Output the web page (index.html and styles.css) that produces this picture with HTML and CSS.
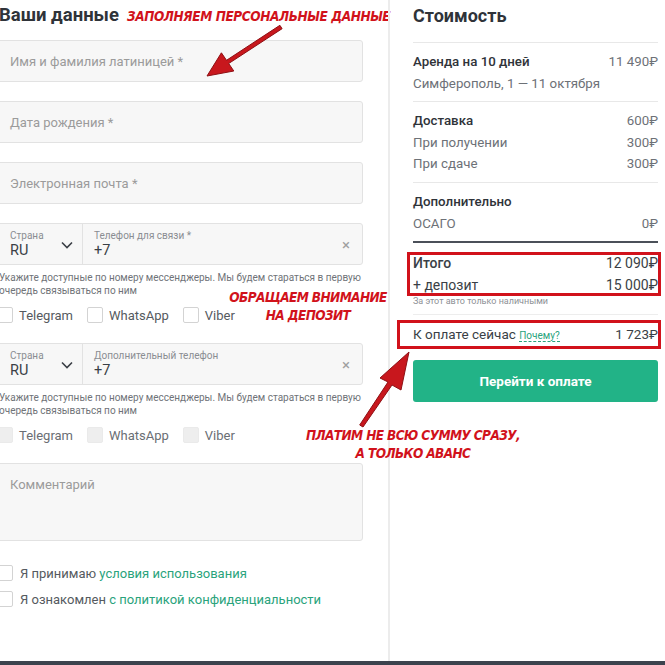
FILE: index.html
```html
<!DOCTYPE html>
<html lang="ru">
<head>
    <meta charset="UTF-8">
    <meta name="viewport" content="width=device-width, initial-scale=1.0">
    <title>Оформление аренды</title>
    <link rel="stylesheet" href="styles.css">
</head>
<body>
    <div class="page">
        <main class="layout">
            <section class="form">
                <div class="form-head">
                    <h1>Ваши данные</h1>
                    <span class="note note-top">ЗАПОЛНЯЕМ ПЕРСОНАЛЬНЫЕ ДАННЫЕ</span>
                </div>

                <div class="field">Имя и фамилия латиницей *</div>
                <div class="field">Дата рождения *</div>
                <div class="field">Электронная почта *</div>

                <div class="phone">
                    <div class="phone-country">
                        <div class="phone-text">
                            <span class="phone-label">Страна</span>
                            <span class="phone-value">RU</span>
                        </div>
                        <svg class="chevron" width="12" height="8" viewBox="0 0 12 8"><path d="M1 1.5l5 5 5-5" fill="none" stroke="#3a3f46" stroke-width="1.6"/></svg>
                    </div>
                    <div class="phone-number">
                        <div class="phone-text">
                            <span class="phone-label">Телефон для связи *</span>
                            <span class="phone-value">+7</span>
                        </div>
                        <span class="phone-clear">×</span>
                    </div>
                </div>
                <p class="hint">Укажите доступные по номеру мессенджеры. Мы будем стараться в первую<br>очередь связываться по ним</p>
                <div class="messengers">
                    <label class="check"><span class="box"></span>Telegram</label>
                    <label class="check"><span class="box"></span>WhatsApp</label>
                    <label class="check"><span class="box"></span>Viber</label>
                </div>

                <div class="phone">
                    <div class="phone-country">
                        <div class="phone-text">
                            <span class="phone-label">Страна</span>
                            <span class="phone-value">RU</span>
                        </div>
                        <svg class="chevron" width="12" height="8" viewBox="0 0 12 8"><path d="M1 1.5l5 5 5-5" fill="none" stroke="#3a3f46" stroke-width="1.6"/></svg>
                    </div>
                    <div class="phone-number">
                        <div class="phone-text">
                            <span class="phone-label">Дополнительный телефон</span>
                            <span class="phone-value">+7</span>
                        </div>
                        <span class="phone-clear">×</span>
                    </div>
                </div>
                <p class="hint">Укажите доступные по номеру мессенджеры. Мы будем стараться в первую<br>очередь связываться по ним</p>
                <div class="messengers disabled">
                    <label class="check"><span class="box"></span>Telegram</label>
                    <label class="check"><span class="box"></span>WhatsApp</label>
                    <label class="check"><span class="box"></span>Viber</label>
                </div>

                <div class="field comment">Комментарий</div>

                <div class="agree">
                    <label class="check"><span class="box"></span>Я принимаю&nbsp;<a>условия использования</a></label>
                    <label class="check"><span class="box"></span>Я ознакомлен&nbsp;<a>с политикой конфиденциальности</a></label>
                </div>
            </section>

            <aside class="summary">
                <h2>Стоимость</h2>
                <div class="group">
                    <div class="row strong"><span>Аренда на 10 дней</span><span class="price">11 490₽</span></div>
                    <div class="row"><span>Симферополь, 1 — 11 октября</span></div>
                </div>
                <div class="group">
                    <div class="row strong"><span>Доставка</span><span class="price">600₽</span></div>
                    <div class="row"><span>При получении</span><span class="price">300₽</span></div>
                    <div class="row"><span>При сдаче</span><span class="price">300₽</span></div>
                </div>
                <div class="group group-last">
                    <div class="row strong"><span>Дополнительно</span></div>
                    <div class="row"><span>ОСАГО</span><span class="price">0₽</span></div>
                </div>
                <div class="totals">
                    <div class="row strong dark"><span>Итого</span><span class="price">12 090₽</span></div>
                    <div class="row dark"><span>+ депозит</span><span class="price">15 000₽</span></div>
                    <span class="mark mark-totals"></span>
                </div>
                <p class="cash">За этот авто только наличными</p>
                <div class="pay-now">
                    <span class="pay-label">К оплате сейчас <a class="why">Почему?</a></span>
                    <span class="price">1 723₽</span>
                    <span class="mark mark-pay"></span>
                </div>
                <button class="pay-btn">Перейти к оплате</button>
            </aside>
        </main>
        <div class="bottom-bar"></div>

        <div class="note note-deposit">ОБРАЩАЕМ ВНИМАНИЕ<br>НА ДЕПОЗИТ</div>
        <div class="note note-advance">ПЛАТИМ НЕ ВСЮ СУММУ СРАЗУ,<br>А ТОЛЬКО АВАНС</div>

        <svg class="arrow arrow-top" width="90" height="62" viewBox="0 0 90 62">
            <polygon points="79.9,5.3 82.1,8.7 28.7,43.5 33.8,51 7,56 21.4,32.8 26.5,40.3" fill="#c8171d" stroke="#8e1014" stroke-width="1"/>
        </svg>
        <svg class="arrow arrow-pay" width="70" height="80" viewBox="0 0 70 80">
            <polygon points="9.7,75 13,77 42,35 51,40 59,2 30,28 38,32" fill="#c8171d" stroke="#8e1014" stroke-width="1"/>
        </svg>
    </div>
</body>
</html>
```

FILE: styles.css
```css
:root {
    --text: #2f3339;
    --muted: #6d7177;
    --placeholder: #9b9b9b;
    --field-bg: #f7f7f7;
    --field-border: #e2e2e2;
    --green: #2aa37c;
    --button: #22b387;
    --red: #d1121b;
}

* {
    margin: 0;
    padding: 0;
    box-sizing: border-box;
}

body {
    width: 665px;
    height: 665px;
    overflow: hidden;
    background: #fff;
    color: var(--text);
    font-family: Roboto, "Noto Sans", sans-serif;
    font-size: 13px;
}

.page {
    position: relative;
    height: 665px;
}

.layout {
    display: flex;
    height: 661px;
}

/* left column */
.form {
    width: 366px;
    margin-left: -3px;
    flex-shrink: 0;
}

.form-head {
    display: flex;
    align-items: center;
    gap: 8px;
    height: 30px;
    margin-bottom: 10px;
    white-space: nowrap;
}

.form-head h1 {
    font-size: 18.5px;
    font-weight: 700;
    color: var(--text);
    margin-left: 2px;
    flex-shrink: 0;
}

.field {
    height: 42px;
    margin-bottom: 19px;
    padding: 0 12px;
    display: flex;
    align-items: center;
    background: var(--field-bg);
    border: 1px solid var(--field-border);
    border-radius: 3px;
    color: var(--placeholder);
    font-size: 13px;
}

.field.comment {
    height: 78px;
    align-items: flex-start;
    padding-top: 13px;
    margin: 0 0 23px;
}

.phone {
    display: flex;
    height: 42px;
    background: var(--field-bg);
    border: 1px solid var(--field-border);
    border-radius: 3px;
}

.phone-country {
    width: 85px;
    display: flex;
    align-items: center;
    justify-content: space-between;
    padding: 0 9px 0 12px;
    border-right: 1px solid var(--field-border);
}

.phone-number {
    flex: 1;
    display: flex;
    align-items: center;
    justify-content: space-between;
    padding: 0 12px 0 11px;
}

.phone-text {
    display: flex;
    flex-direction: column;
    padding-top: 1px;
}

.phone-label {
    font-size: 10px;
    line-height: 13px;
    color: #8a8d92;
}

.phone-value {
    font-size: 14.5px;
    line-height: 18px;
    color: #3a3f46;
}

.chevron {
    margin-top: 2px;
}

.phone-clear {
    font-size: 15px;
    color: #a0a0a0;
    margin-top: 1px;
}

.hint {
    margin: 6px 0 0 2px;
    font-size: 10px;
    line-height: 13px;
    color: #6f7378;
}

.messengers {
    display: flex;
    gap: 14px;
    margin: 9px 0 19px;
}

.check {
    display: flex;
    align-items: center;
    height: 18px;
    font-size: 13px;
    color: #555a60;
}

.box {
    width: 16px;
    height: 16px;
    margin-right: 6px;
    border: 1px solid #d3d3d3;
    border-radius: 2px;
    background: #fff;
}

.messengers.disabled .box {
    background: #eeeeee;
    border-color: #eaeaea;
}

.messengers.disabled .check {
    color: #6a6e74;
}

.messengers.disabled {
    margin-bottom: 19px;
}

.agree {
    display: flex;
    flex-direction: column;
    gap: 8px;
}

.agree .check {
    font-size: 13px;
}

.agree .box {
    margin-right: 7px;
}

.agree a {
    color: var(--green);
}

/* right column */
.summary {
    flex: 1;
    margin-left: 25px;
    padding: 0 7px 0 23px;
    border-left: 2px solid #ececec;
}

.summary h2 {
    height: 30px;
    display: flex;
    align-items: center;
    font-size: 18px;
    font-weight: 700;
    margin-bottom: 12px;
}

.group {
    border-top: 1px solid #e8e8e8;
    padding: 8px 0 7px;
}

.group-last {
    border-bottom: 2px solid #4b5059;
}

.row {
    display: flex;
    justify-content: space-between;
    line-height: 21.6px;
    font-size: 13.3px;
    color: var(--muted);
}

.row.strong {
    font-weight: 500;
    color: var(--text);
}

.row .price {
    font-weight: 400;
    color: var(--muted);
}

.row.dark,
.row.dark .price {
    color: #3a3f46;
    font-size: 14px;
}

.totals {
    position: relative;
    margin-top: 10px;
}

.cash {
    font-size: 9px;
    line-height: 11px;
    color: #8e9196;
    padding-bottom: 7px;
    border-bottom: 1px solid #ededed;
}

.pay-now {
    position: relative;
    display: flex;
    justify-content: space-between;
    align-items: center;
    height: 38px;
    font-size: 13.5px;
    color: #3a3f46;
}

.why {
    font-size: 10px;
    color: var(--green);
    border-bottom: 1px dashed var(--green);
}

.pay-btn {
    width: 100%;
    height: 42px;
    margin-top: 7px;
    border: none;
    border-radius: 3px;
    background: var(--button);
    color: #fff;
    font-family: Roboto, sans-serif;
    font-size: 13.5px;
    font-weight: 700;
}

.bottom-bar {
    height: 4px;
    background: #3c434e;
}

/* red annotations drawn over the screenshot */
.mark {
    position: absolute;
    border: 3px solid var(--red);
    pointer-events: none;
}

.mark-totals {
    left: -6px;
    right: -3px;
    top: -1px;
    bottom: 0;
}

.mark-pay {
    left: -16px;
    right: -3px;
    top: 5px;
    bottom: 4px;
}

.note {
    font-family: "DejaVu Sans", sans-serif;
    font-stretch: condensed;
    font-style: italic;
    font-weight: 700;
    color: var(--red);
    white-space: nowrap;
}

.note-top {
    font-size: 13.5px;
    margin-top: 2px;
    letter-spacing: -0.4px;
}

.note-deposit,
.note-advance {
    position: absolute;
    text-align: center;
    font-size: 13.5px;
    line-height: 18px;
    letter-spacing: -0.6px;
}

.note-deposit {
    left: 208px;
    top: 288px;
    width: 200px;
}

.note-advance {
    left: 288px;
    top: 426px;
    width: 250px;
}

.arrow {
    position: absolute;
}

.arrow-top {
    left: 200px;
    top: 20px;
}

.arrow-pay {
    left: 350px;
    top: 350px;
}
```
